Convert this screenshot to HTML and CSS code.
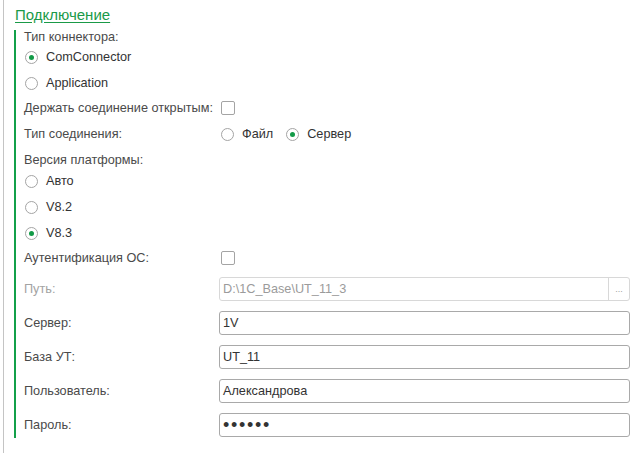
FILE: index.html
```html
<!DOCTYPE html>
<html lang="ru">
<head>
<meta charset="utf-8">
<link rel="stylesheet" href="styles.css">
</head>
<body>
<div class="page">
  <div class="title"><span class="title-link">Подключение</span></div>
  <div class="group">
    <div class="caption first">Тип коннектора:</div>
    <div class="opt-row"><span class="radio checked"></span><span class="opt">ComConnector</span></div>
    <div class="opt-row"><span class="radio"></span><span class="opt">Application</span></div>
    <div class="row short">
      <span class="lbl col">Держать соединение открытым:</span>
      <div class="field-col"><span class="check"></span></div>
    </div>
    <div class="row tall">
      <span class="lbl col">Тип соединения:</span>
      <div class="field-col radios">
        <span class="radio"></span><span class="opt">Файл</span>
        <span class="radio second checked"></span><span class="opt">Сервер</span>
      </div>
    </div>
    <div class="caption">Версия платформы:</div>
    <div class="opt-row"><span class="radio"></span><span class="opt">Авто</span></div>
    <div class="opt-row"><span class="radio"></span><span class="opt">V8.2</span></div>
    <div class="opt-row"><span class="radio checked"></span><span class="opt">V8.3</span></div>
    <div class="row short">
      <span class="lbl col">Аутентификация ОС:</span>
      <div class="field-col"><span class="check"></span></div>
    </div>
    <div class="inputs">
      <div class="irow">
        <span class="lbl col disabled">Путь:</span>
        <div class="input dis"><span class="val">D:\1C_Base\UT_11_3</span><span class="btn">...</span></div>
      </div>
      <div class="irow">
        <span class="lbl col">Сервер:</span>
        <div class="input"><span class="val">1V</span></div>
      </div>
      <div class="irow">
        <span class="lbl col">База УТ:</span>
        <div class="input"><span class="val">UT_11</span></div>
      </div>
      <div class="irow">
        <span class="lbl col">Пользователь:</span>
        <div class="input"><span class="val">Александрова</span></div>
      </div>
      <div class="irow">
        <span class="lbl col">Пароль:</span>
        <div class="input"><span class="val pwd">••••••</span></div>
      </div>
    </div>
  </div>
</div>
</body>
</html>
```
FILE: styles.css
```css
html, body {
  margin: 0;
  padding: 0;
  background: #fff;
}
body {
  font-family: "Liberation Sans", Arial, sans-serif;
  font-size: 12.7px;
  color: #4a4a4a;
}
.page {
  margin-left: 3px;
  border-left: 1px solid #c4c4c4;
  padding: 6px 0 0 11px;
  min-height: 447px;
}
.title {
  font-size: 15px;
  line-height: 18px;
  height: 18px;
}
.title-link {
  color: #1a9a48;
  text-decoration: underline;
  text-underline-offset: 2px;
}
.group {
  margin: 6px 0 0 -1px;
  border-left: 2px solid #13a04a;
  padding-left: 8px;
  width: 606px;
}
.caption {
  line-height: 16px;
  padding-top: 4px;
  height: 16px;
}
.caption.first {
  padding-top: 0;
  height: 14px;
  line-height: 14px;
}
.opt-row {
  height: 26px;
  display: flex;
  align-items: center;
  padding-left: 1px;
}
.radio {
  width: 13px;
  height: 13px;
  box-sizing: border-box;
  border: 1px solid #a4a4a4;
  border-radius: 50%;
  display: inline-flex;
  align-items: center;
  justify-content: center;
  flex: none;
}
.radio.checked::after {
  content: "";
  width: 5px;
  height: 5px;
  border-radius: 50%;
  background: #129a47;
}
.opt {
  color: #333;
  margin-left: 8px;
}
.row {
  display: flex;
  align-items: center;
}
.row.short { height: 24px; }
.row.tall { height: 28px; }
.col {
  width: 195px;
  flex: none;
  white-space: nowrap;
}
.field-col {
  display: flex;
  align-items: center;
  padding-left: 2px;
}
.radios .radio.second {
  margin-left: 13px;
}
.check {
  width: 14px;
  height: 14px;
  box-sizing: border-box;
  border: 1px solid #a4a4a4;
  border-radius: 2px;
  display: inline-block;
}
.inputs {
  padding-top: 7px;
  display: flex;
  flex-direction: column;
  gap: 10px;
  padding-bottom: 1px;
}
.irow {
  display: flex;
  align-items: center;
  height: 24px;
}
.lbl.disabled {
  color: #a3a3a3;
}
.input {
  width: 411px;
  height: 24px;
  box-sizing: border-box;
  border: 1px solid #a9a9a9;
  border-radius: 3px;
  display: flex;
  align-items: center;
  color: #333;
}
.input .val {
  flex: 1;
  padding-left: 3px;
  white-space: nowrap;
}
.input.dis {
  border-color: #d8d8d8;
  color: #9b9b9b;
}
.btn {
  width: 20px;
  height: 22px;
  border-left: 1px solid #d8d8d8;
  color: #a0a0a0;
  font-size: 9px;
  line-height: 22px;
  text-align: center;
  flex: none;
}
.pwd {
  font-size: 18px;
  letter-spacing: 1.7px;
  color: #333;
  line-height: 22px;
}
```
